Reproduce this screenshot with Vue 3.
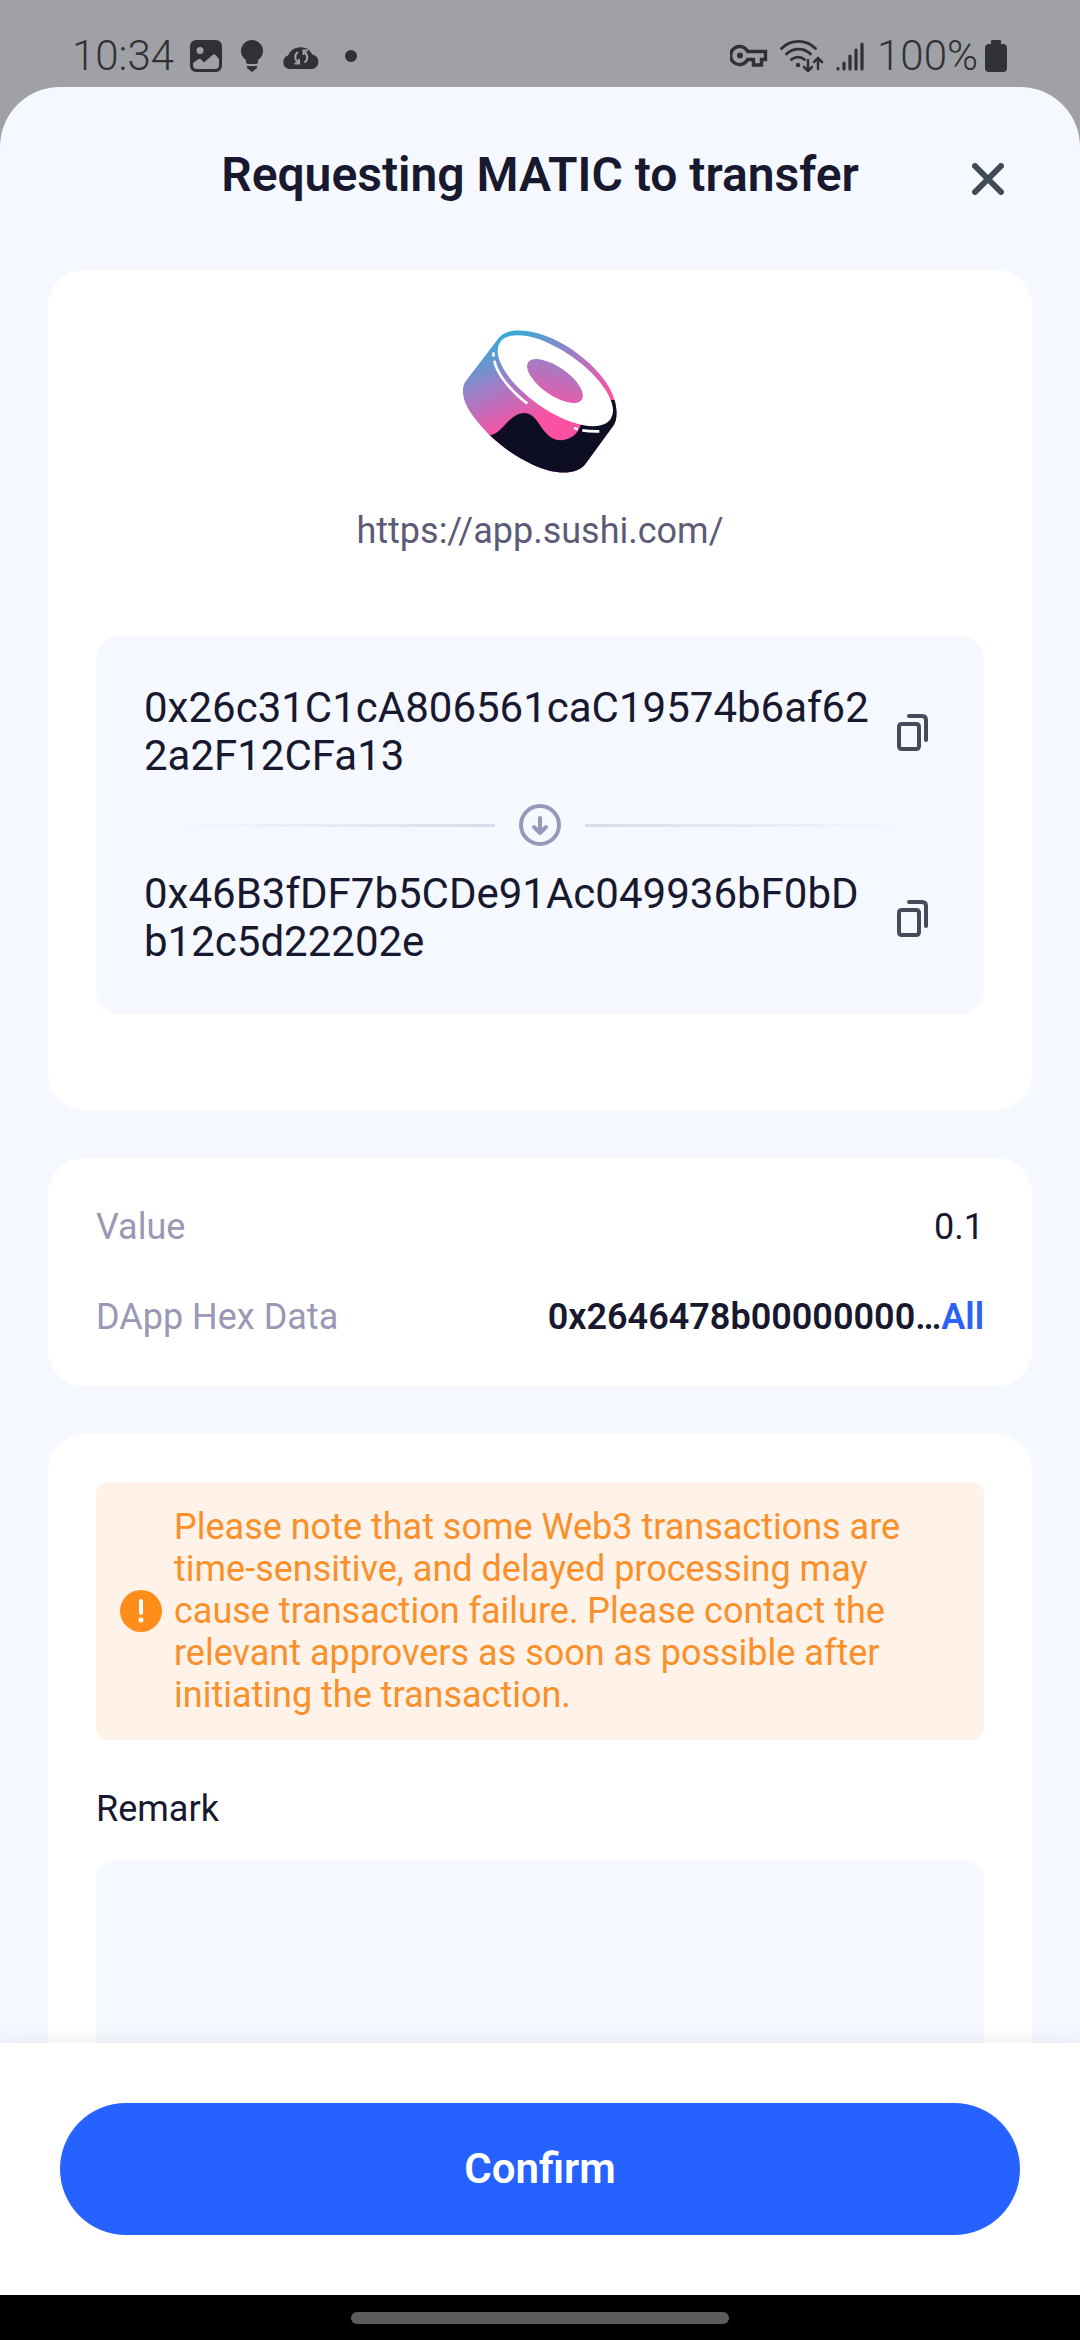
<script setup>
import { ref } from 'vue'

const site = 'https://app.sushi.com/'
const from = '0x26c31C1cA806561caC19574b6af622a2F12CFa13'
const to = '0x46B3fDF7b5CDe91Ac049936bF0bDb12c5d22202e'
const remark = ref('')

const copy = (text) => navigator.clipboard?.writeText(text)
</script>

<template>
  <div class="screen">
    <header class="status">
      <div class="status-group notifications">
        <span class="clock">10:34</span>
        <svg width="32" height="32" viewBox="0 0 32 32" aria-hidden="true">
          <path fill-rule="evenodd" fill="currentColor" d="M6 0h20a6 6 0 0 1 6 6v20a6 6 0 0 1-6 6H6a6 6 0 0 1-6-6V6a6 6 0 0 1 6-6Zm4 7a3.500 3.500 0 1 0 0 7a3.500 3.500 0 0 0 0-7ZM3 23v2a4 4 0 0 0 4 4h18a4 4 0 0 0 4-4v-6l-3.500-4q-1.500-1.500-3 0L14 22.500l-3-3q-1.500-1.500-3 0Z" />
        </svg>
        <svg class="bulb" width="22" height="32" viewBox="0 0 22 32" aria-hidden="true">
          <path fill="currentColor" d="M11 0a11 11 0 0 1 11 11c0 4-2 7-5 9v2q0 2-2 2H7q-2 0-2-2v-2c-3-2-5-5-5-9A11 11 0 0 1 11 0ZM6 26h10v2l-5 4-5-4Z" />
        </svg>
        <svg width="38" height="26" viewBox="0 0 38 26" aria-hidden="true">
          <path fill="currentColor" d="M7 26a7 7 0 0 1-1-13.500 13.500 13.500 0 0 1 24.500-1A7.500 7.500 0 0 1 31 26Z" />
          <path fill="none" stroke="#a0a1a6" stroke-width="2" d="M16 9c-4 3-3.500 8 .5 11M12.500 20.500h4.500v-4.500M22.500 19.500c4-3 3.500-8-.5-11M26 7.500h-4.500v4.500" />
        </svg>
        <span class="more-dot"></span>
      </div>
      <div class="status-group system">
        <svg width="38" height="24" viewBox="0 0 38 24" aria-hidden="true">
          <path fill="none" stroke="currentColor" stroke-width="3.400" d="M17.600 7.500A9 9 0 1 0 17.600 15.500H23.500V21H31.500V15.500H35.500V7.500Z" />
          <circle cx="10" cy="11.500" r="3" fill="currentColor" />
        </svg>
        <svg class="wifi" width="44" height="34" viewBox="0 0 44 34" aria-hidden="true">
          <g fill="none" stroke="currentColor" stroke-width="2.800" stroke-linecap="round">
            <path d="M1.500 9.500a24 24 0 0 1 34 0M6.500 15a17 17 0 0 1 24 0M11.500 20.500a10 10 0 0 1 13 0" />
            <path d="M28 21v11m-4-4 4 4 4-4M38 30V19m-4 4 4-4 4 4" stroke-width="2.500" />
          </g>
          <circle cx="18" cy="26" r="2.200" fill="currentColor" />
        </svg>
        <svg class="signal" width="28" height="29" viewBox="0 0 28 29" aria-hidden="true">
          <path stroke="currentColor" stroke-width="3.200" stroke-linecap="round" d="M2 26.500v.5M8 21v6M14 14v13M20 8v19M26 2v25" />
        </svg>
        <span class="clock">100%</span>
        <svg width="22" height="32" viewBox="0 0 22 32" aria-hidden="true">
          <path fill="currentColor" d="M7 0h8q1 0 1 1v3h2q4 0 4 4v20q0 4-4 4H4q-4 0-4-4V8q0-4 4-4h2V1q0-1 1-1Z" />
        </svg>
      </div>
    </header>

    <main class="sheet">
      <div class="sheet-header">
        <h1>Requesting MATIC to transfer</h1>
        <button class="close" type="button" aria-label="Close">
          <svg width="32" height="32" viewBox="0 0 32 32" aria-hidden="true">
            <path stroke="#404b57" stroke-width="6" stroke-linecap="round" d="m3 3 26 26M29 3 3 29" />
          </svg>
        </button>
      </div>

      <div class="content">
        <section class="card dapp">
          <svg class="logo" viewBox="48 24 504 504" aria-hidden="true">
            <defs>
              <linearGradient id="roll" gradientUnits="userSpaceOnUse" x1="180" y1="60" x2="290" y2="330">
                <stop offset="0" stop-color="#27b0d8" />
                <stop offset=".45" stop-color="#9284cb" />
                <stop offset="1" stop-color="#fb51a3" />
              </linearGradient>
            </defs>
            <path fill="url(#roll)" d="M178 82C208 45 310 58 400 121C470 172 512 225 524 272C533 305 531 330 521 346L434 465C407 495 345 495 280 465C225 440 180 405 150 377C105 330 72 290 69 250C68 235 70 222 78 212Z" />
            <path fill="#0e0e23" d="M150 376C190 370 205 310 255 309C300 312 305 390 362 391C395 390 415 370 424 340L508 270L524 270C533 305 531 330 521 346L434 465C407 495 345 495 280 465C225 440 180 405 150 376Z" />
            <ellipse cx="346" cy="212" rx="202" ry="88" transform="rotate(35 346 212)" fill="#fff" />
            <ellipse cx="345" cy="213" rx="98" ry="42" transform="rotate(35 345 213)" fill="url(#roll)" />
            <path fill="none" stroke="#fff" stroke-width="8" d="M160 127l1 13M163 152C170 190 212 244 262 281M402 354l12 4M427 361q25 4 51 3" />
          </svg>
          <p class="site">{{ site }}</p>

          <div class="route">
            <div class="address-row">
              <p class="address">{{ from }}</p>
              <button class="copy" type="button" aria-label="Copy sender address" @click="copy(from)">
                <svg width="48" height="48" viewBox="0 0 48 48" aria-hidden="true">
                  <path fill="none" stroke="#464b5a" stroke-width="4" stroke-linecap="round" d="M13 16h15q3 0 3 3v19q0 3-3 3H14q-3 0-3-3V19q0-3 3-3ZM21 8h13q4 0 4 4v20" />
                </svg>
              </button>
            </div>
            <div class="divider">
              <span class="line line-left"></span>
              <svg width="42" height="42" viewBox="0 0 42 42" aria-hidden="true">
                <g fill="none" stroke="#9a98b8" stroke-width="4" stroke-linecap="round" stroke-linejoin="round">
                  <circle cx="21" cy="21" r="19" />
                  <path d="M21 14v14M15 23l6 6 6-6" />
                </g>
              </svg>
              <span class="line line-right"></span>
            </div>
            <div class="address-row">
              <p class="address">{{ to }}</p>
              <button class="copy" type="button" aria-label="Copy recipient address" @click="copy(to)">
                <svg width="48" height="48" viewBox="0 0 48 48" aria-hidden="true">
                  <path fill="none" stroke="#464b5a" stroke-width="4" stroke-linecap="round" d="M13 16h15q3 0 3 3v19q0 3-3 3H14q-3 0-3-3V19q0-3 3-3ZM21 8h13q4 0 4 4v20" />
                </svg>
              </button>
            </div>
          </div>
        </section>

        <dl class="card details">
          <div class="detail">
            <dt>Value</dt>
            <dd>0.1</dd>
          </div>
          <div class="detail">
            <dt>DApp Hex Data</dt>
            <dd class="hex">0x2646478b00000000…<button class="all" type="button">All</button></dd>
          </div>
        </dl>

        <section class="card note">
          <div class="warning" role="note">
            <svg width="42" height="42" viewBox="0 0 42 42" aria-hidden="true">
              <circle cx="21" cy="21" r="21" fill="#ff8d1a" />
              <path stroke="#fff" stroke-width="4" stroke-linecap="round" d="M21 11v12" />
              <circle cx="21" cy="30" r="2.500" fill="#fff" />
            </svg>
            <p>Please note that some Web3 transactions are time-sensitive, and delayed processing may cause transaction failure. Please contact the relevant approvers as soon as possible after initiating the transaction.</p>
          </div>
          <label for="remark">Remark</label>
          <textarea id="remark" v-model="remark"></textarea>
        </section>
      </div>

      <footer class="actions">
        <button class="confirm" type="button">Confirm</button>
      </footer>
    </main>

    <div class="nav-bar"><span class="home-pill"></span></div>
  </div>
</template>

<style>
body {
  margin: 0;
}
</style>

<style scoped>
* {
  box-sizing: border-box;
}

.screen {
  display: flex;
  flex-direction: column;
  height: 100vh;
  background: #a0a1a6;
  color: #18182e;
  font-family: Roboto, "Noto Sans", sans-serif;
  font-size: 36px;
  line-height: 42px;
}

h1,
p,
dl,
dd {
  margin: 0;
}

svg {
  display: block;
  flex: none;
}

button {
  padding: 0;
  border: 0;
  background: none;
  color: inherit;
  font: inherit;
  cursor: pointer;
}

.status {
  display: flex;
  flex: none;
  justify-content: space-between;
  height: 87px;
  padding: 26px 73px 0 72px;
  color: #303134;
}

.status-group {
  display: flex;
  align-items: center;
  height: 60px;
}

.notifications {
  gap: 16px;
}

.bulb {
  margin: 0 3px;
}

.more-dot {
  width: 12px;
  height: 12px;
  margin-left: 9px;
  border-radius: 50%;
  background: currentColor;
}

.system {
  gap: 7px;
}

.wifi {
  margin-left: 5px;
}

.signal {
  margin: 0 6px 0 5px;
}

.clock {
  font-size: 42px;
  font-weight: 300;
  line-height: 48px;
}

.sheet {
  display: flex;
  flex: 1;
  flex-direction: column;
  min-height: 0;
  overflow: hidden;
  border-radius: 60px 60px 0 0;
  background: #f5f8ff;
}

.sheet-header {
  display: grid;
  flex: none;
  grid-template-columns: 64px 1fr 64px;
  align-items: start;
  padding: 60px 60px 59px;
}

h1 {
  grid-column: 2;
  font-size: 48px;
  font-weight: 600;
  line-height: 56px;
  text-align: center;
}

.close {
  display: grid;
  place-items: center;
  height: 64px;
}

.content {
  display: flex;
  flex: 1;
  flex-direction: column;
  gap: 48px;
  min-height: 0;
  padding: 0 48px;
  overflow-y: auto;
  scrollbar-width: none;
}

.card {
  flex: none;
  padding: 48px;
  border-radius: 36px;
  background: #fff;
}

.dapp {
  display: flex;
  flex-direction: column;
  align-items: center;
  padding-bottom: 96px;
}

.logo {
  width: 168px;
  height: 168px;
}

.site {
  margin: 24px 0 84px;
  color: #5d5a78;
}

.route {
  align-self: stretch;
  padding: 48px;
  border-radius: 24px;
  background: #f5f8ff;
}

.address-row {
  display: flex;
  gap: 12px;
  align-items: center;
}

.address {
  flex: 1;
  min-width: 0;
  font-size: 42px;
  line-height: 48px;
  word-break: break-all;
}

.divider {
  display: flex;
  gap: 24px;
  align-items: center;
  margin: 24px 0;
}

.line {
  flex: 1;
  height: 3px;
}

.line-left {
  background: linear-gradient(to left, #dadbe8, #f5f8ff 90%);
}

.line-right {
  background: linear-gradient(to right, #dadbe8, #f5f8ff 90%);
}

.details {
  display: flex;
  flex-direction: column;
  gap: 48px;
}

.detail {
  display: flex;
  justify-content: space-between;
}

dt {
  color: #9a98b4;
}

.hex {
  font-weight: 600;
}

.all {
  color: #2b62f5;
}

.warning {
  display: flex;
  gap: 12px;
  align-items: center;
  padding: 24px;
  border-radius: 12px;
  background: #fff2e8;
  color: #f9902a;
}

label {
  display: block;
  margin: 48px 0 30px;
}

textarea {
  display: block;
  width: 100%;
  height: 240px;
  padding: 24px;
  border: 0;
  border-radius: 18px;
  outline: 0;
  background: #f5f8ff;
  color: inherit;
  font: inherit;
  resize: none;
}

.actions {
  z-index: 1;
  flex: none;
  padding: 60px;
  background: #fff;
  box-shadow: 0 0 24px rgba(0, 0, 0, 0.08);
}

.confirm {
  display: block;
  width: 100%;
  height: 132px;
  border-radius: 66px;
  background: #2662ff;
  color: #fff;
  font-size: 42px;
  font-weight: 600;
  line-height: 48px;
}

.nav-bar {
  display: flex;
  flex: none;
  align-items: center;
  justify-content: center;
  height: 45px;
  background: #000;
}

.home-pill {
  width: 35%;
  height: 12px;
  border-radius: 6px;
  background: #5c5c5c;
}
</style>
